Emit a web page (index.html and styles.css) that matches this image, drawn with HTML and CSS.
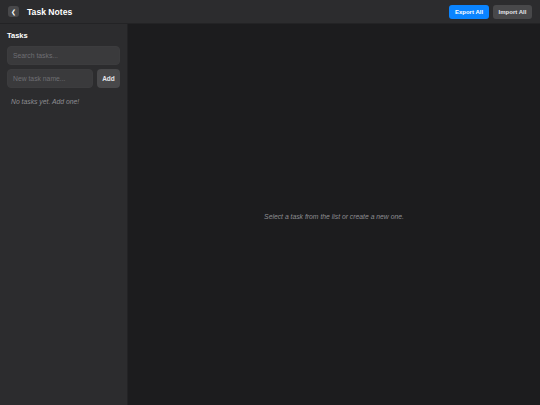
FILE: index.html
```html
<!doctype html>
<html lang="en">
<head>
  <meta charset="UTF-8">
  <meta name="viewport" content="width=device-width, initial-scale=1">
  <title>Task Notes</title>
  <link rel="stylesheet" href="styles.css">
</head>
<body>
  <header class="app-header">
    <div class="header-left">
      <button class="back-btn">&#10094;</button>
      <h1 class="app-title">Task Notes</h1>
    </div>
    <div class="header-actions">
      <button class="btn btn-primary">Export All</button>
      <button class="btn btn-secondary">Import All</button>
    </div>
  </header>
  <div class="app-body">
    <aside class="sidebar">
      <h2 class="sidebar-title">Tasks</h2>
      <input class="field" type="text" placeholder="Search tasks...">
      <div class="add-row">
        <input class="field" type="text" placeholder="New task name...">
        <button class="btn-add">Add</button>
      </div>
      <p class="empty-list">No tasks yet. Add one!</p>
    </aside>
    <main class="content">
      <p class="empty-main">Select a task from the list or create a new one.</p>
    </main>
  </div>
</body>
</html>
```

FILE: styles.css
```css
* {
  box-sizing: border-box;
}

html, body {
  height: 100%;
}

body {
  margin: 0;
  font-family: 'Liberation Sans', Arial, sans-serif;
  background-color: #1c1c1e;
  color: #fff;
  display: flex;
  flex-direction: column;
}

h1, h2, p {
  margin: 0;
}

.app-header {
  height: 24px;
  flex-shrink: 0;
  display: flex;
  align-items: center;
  justify-content: space-between;
  padding: 0 8px;
  background-color: #2c2c2e;
  border-bottom: 1px solid #232325;
}

.header-left {
  display: flex;
  align-items: center;
  gap: 8px;
}

.back-btn {
  width: 11px;
  height: 11px;
  padding: 0;
  border: none;
  border-radius: 3px;
  background-color: #48484a;
  color: #fff;
  font-size: 6px;
  font-weight: bold;
  line-height: 11px;
  font-family: 'DejaVu Sans', sans-serif;
}

.app-title {
  font-size: 8.6px;
  font-weight: bold;
}

.header-actions {
  display: flex;
  gap: 4px;
}

.btn {
  height: 14px;
  width: 40px;
  padding: 0;
  border: none;
  border-radius: 3px;
  color: #fff;
  font-family: inherit;
  font-size: 6px;
  font-weight: bold;
}

.btn-primary {
  background-color: #0a84ff;
}

.btn-secondary {
  width: 39px;
  background-color: #48484a;
  color: #e5e5ea;
}

.app-body {
  flex: 1;
  display: flex;
}

.sidebar {
  width: 127px;
  flex-shrink: 0;
  background-color: #2c2c2e;
  padding: 7px 7px 7px 7px;
  display: flex;
  flex-direction: column;
  gap: 4px;
}

.sidebar-title {
  font-size: 7.5px;
  font-weight: bold;
  margin-bottom: 2px;
}

.field {
  height: 19px;
  width: 100%;
  border: 1px solid #3c3c3e;
  border-radius: 4px;
  background-color: #3a3a3c;
  color: #fff;
  padding: 0 5px;
  font-family: inherit;
  font-size: 6.8px;
}

.field::placeholder {
  color: #6e6e73;
}

.add-row {
  display: flex;
  gap: 4px;
}

.add-row .field {
  flex: 1;
  min-width: 0;
}

.btn-add {
  width: 23px;
  height: 19px;
  flex-shrink: 0;
  border: none;
  border-radius: 4px;
  background-color: #48484a;
  color: #e5e5ea;
  font-family: inherit;
  font-size: 6.5px;
  font-weight: bold;
  padding: 0;
}

.empty-list {
  margin-top: 6px;
  padding-left: 4px;
  font-size: 6.8px;
  font-style: italic;
  color: #8e8e93;
}

.content {
  flex: 1;
  display: flex;
  align-items: center;
  justify-content: center;
  padding-top: 3px;
  border-left: 1px solid #232325;
}

.empty-main {
  font-size: 6.8px;
  font-style: italic;
  color: #8e8e93;
}
```
